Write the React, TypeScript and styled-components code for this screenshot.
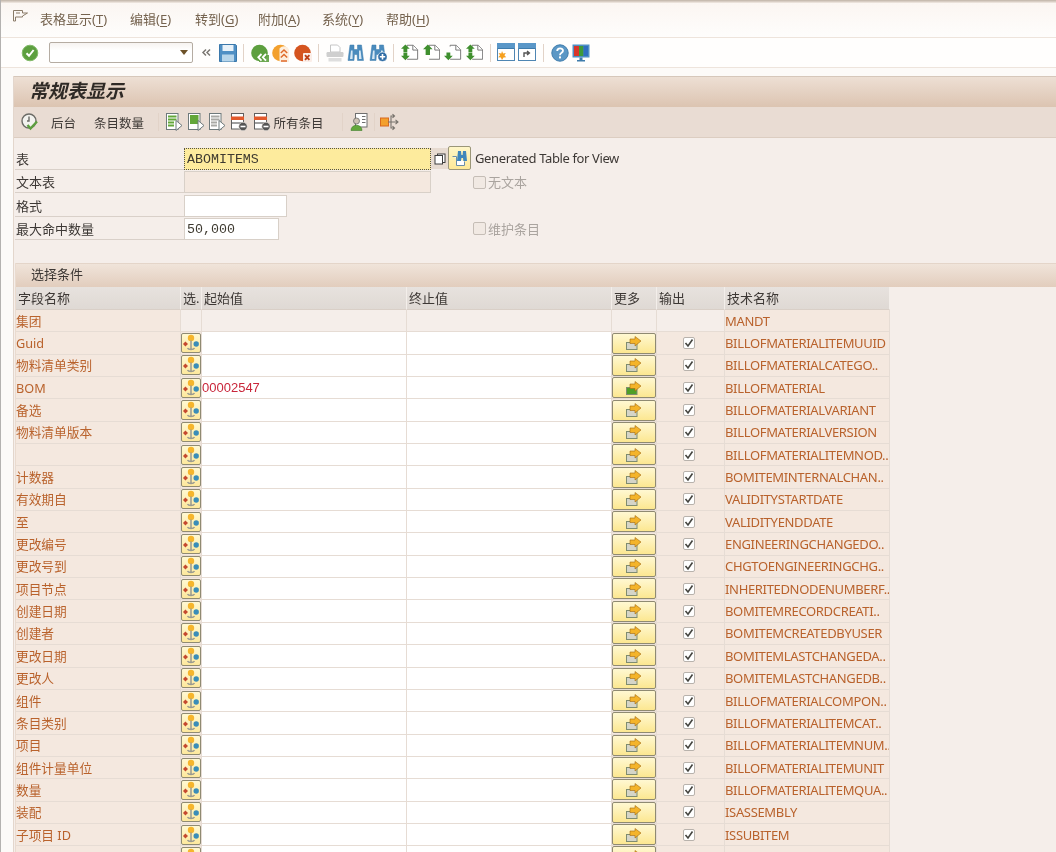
import React from "react";
import styled, { createGlobalStyle } from "styled-components";

const Global = createGlobalStyle`
  html, body { margin: 0; padding: 0; background: #fbf8f6; }
  body { font-family: "Noto Sans", "Noto Sans CJK SC", sans-serif; font-size: 13px; }
`;

const CJK = `"Noto Sans", "Noto Sans CJK SC", sans-serif`;

const Page = styled.div`
  width: 1056px;
  height: 852px;
  overflow: hidden;
  display: flex;
  flex-direction: column;
  background: #fcfaf8;
  border-left: 1px solid #b4b2b0;
  box-sizing: border-box;
  font-family: ${CJK};
  filter: blur(0.3px);
`;
const TopEdge = styled.div`
  height: 3px;
  flex: none;
  margin-left: -1px;
  background: linear-gradient(#bfb3a6, #ddd3ca 60%, #f3ece6);
`;
const MenuBar = styled.nav`
  height: 34px;
  flex: none;
  display: flex;
  align-items: center;
  padding-left: 11px;
  background: linear-gradient(#fbf6f2, #fefdfc);
  box-sizing: border-box;
  padding-bottom: 3px;
`;
const MenuGlyph = styled.svg`
  width: 17px;
  height: 14px;
  margin-right: 11px;
  margin-top: -6px;
`;
const MenuItem = styled.span<{ $w: number }>`
  width: ${(p) => p.$w}px;
  flex: none;
  color: #75634f;
  font-size: 13px;
  line-height: 18px;
  white-space: nowrap;
  u { text-underline-offset: 2px; }
`;
const ToolBar = styled.div`
  height: 31px;
  flex: none;
  display: flex;
  align-items: center;
  padding-left: 18px;
  box-sizing: border-box;
  background: #fffefd;
  border-top: 1px solid #eee4dc;
  border-bottom: 1px solid #eee4dc;
`;
const Command = styled.div`
  width: 144px;
  height: 21px;
  margin-left: 8px;
  margin-right: 3px;
  box-sizing: border-box;
  background: linear-gradient(#f6f3f0, #ffffff 40%);
  border: 1px solid #b5aca2;
  border-radius: 2px;
  display: flex;
  align-items: center;
  justify-content: flex-end;
  padding-right: 4px;
`;
const Caret = styled.span`
  width: 0;
  height: 0;
  border-left: 4px solid transparent;
  border-right: 4px solid transparent;
  border-top: 5px solid #6d5229;
`;
const Tool = styled.span<{ $w?: number }>`
  width: ${(p) => p.$w ?? 21.5}px;
  height: 22px;
  flex: none;
  display: flex;
  align-items: center;
  justify-content: center;
`;
const Sep = styled.span`
  width: 1px;
  height: 18px;
  flex: none;
  margin: 0 4.75px;
  background: #e2d3c8;
`;
const Main = styled.main`
  margin-top: 8px;
  margin-left: 12px;
  flex: 1;
  min-height: 0;
  background: #f5eeea;
  border-left: 1px solid #e3d6cc;
`;
const TitleBar = styled.header`
  height: 31px;
  display: flex;
  align-items: center;
  padding: 0 0 5px 15px;
  box-sizing: border-box;
  background: linear-gradient(#eddfd4, #dcc4b1);
  border-top: 1px solid #d6c7ba;
`;
const Title = styled.h1`
  margin: 0;
  font-size: 19px;
  font-style: italic;
  font-weight: 700;
  color: #2f2a26;
  font-family: "Noto Sans CJK SC", sans-serif;
`;
const AppBar = styled.div`
  height: 31px;
  display: flex;
  align-items: center;
  padding-left: 5px;
  box-sizing: border-box;
  background: #e9dcd3;
  border-bottom: 1px solid #dccdc1;
`;
const AppLabel = styled.span<{ $ml?: number; $w: number }>`
  margin-left: ${(p) => p.$ml ?? 0}px;
  width: ${(p) => p.$w}px;
  flex: none;
  font-size: 12.5px;
  color: #3d3835;
  white-space: nowrap;
`;
const Form = styled.section`
  height: 125px;
  padding: 10px 0 0 1px;
  box-sizing: border-box;
  display: flex;
  flex-direction: column;
  gap: 1.3px;
`;
const FormRow = styled.div`
  height: 22px;
  display: flex;
  align-items: stretch;
`;
const FormLabel = styled.label`
  width: 169px;
  flex: none;
  box-sizing: border-box;
  line-height: 23px;
  height: 22px;
  padding-left: 1px;
  font-size: 13px;
  color: #3d3835;
  border-bottom: 1px solid #d9d0c9;
`;
const Field = styled.div<{ $w: number; $kind?: "req" | "off" }>`
  width: ${(p) => p.$w}px;
  height: 22px;
  flex: none;
  box-sizing: border-box;
  font-family: "Liberation Mono", monospace;
  font-size: 13.3px;
  line-height: 22px;
  padding-left: 2px;
  color: #3e3a30;
  background: ${(p) => (p.$kind === "req" ? "#fdeb9d" : p.$kind === "off" ? "#f4e8df" : "#ffffff")};
  border: 1px ${(p) => (p.$kind === "req" ? "dotted #56534a" : "solid #d8d0c8")};
`;
const CopyBtn = styled.span`
  width: 17px;
  height: 21px;
  flex: none;
  background: #e7dbd1;
  display: flex;
  align-items: center;
  justify-content: center;
`;
const HelpBtn = styled.span`
  width: 23px;
  height: 24px;
  margin-top: -2px;
  flex: none;
  box-sizing: border-box;
  background: linear-gradient(#fff6c8, #fde997);
  border: 1px solid #9b9678;
  border-radius: 2px;
  display: flex;
  align-items: center;
  justify-content: center;
`;
const Description = styled.span`
  margin-left: 4px;
  line-height: 21px;
  font-size: 13px;
  letter-spacing: -0.38px;
  color: #3d3835;
  white-space: nowrap;
`;
const OffCheck = styled.span<{ $ml: number }>`
  margin-left: ${(p) => p.$ml}px;
  display: flex;
  align-items: center;
  gap: 2px;
  color: #aaa49f;
  font-size: 13px;
  line-height: 22px;
  &::before {
    content: "";
    width: 11px;
    height: 11px;
    border: 1px solid #c5bdb6;
    border-radius: 2px;
    background: #f1e9e3;
  }
`;
const Section = styled.section`
  margin-left: 1px;
  border-left: 1px solid #eadbcf;
`;
const SectionHead = styled.div`
  height: 24px;
  line-height: 21px;
  padding-left: 15px;
  box-sizing: border-box;
  font-size: 13px;
  color: #3d3835;
  background: linear-gradient(#f0e4da, #e2cdbd);
  border-top: 1px solid #e4d5c9;
`;
const Columns = "165px 21px 205px 205px 45px 68px 165px";
const HeadRow = styled.div`
  display: grid;
  grid-template-columns: ${Columns};
  width: 874px;
  height: 23px;
`;
const HeadCell = styled.div`
  background: linear-gradient(#e7e2de, #dfd9d4);
  border-right: 1px solid #f3eeea;
  border-bottom: 1px solid #d9cfc7;
  box-sizing: border-box;
  padding-left: 2px;
  line-height: 22px;
  font-size: 13px;
  color: #3d3835;
  overflow: hidden;
  white-space: nowrap;
`;
const Row = styled.div`
  display: grid;
  grid-template-columns: ${Columns};
  width: 874px;
  height: 22.35px;
`;
const Cell = styled.div<{ $tone: "label" | "blank" | "white" }>`
  box-sizing: border-box;
  border-right: 1px solid #e6dcd4;
  border-bottom: 1px solid #e6dcd4;
  background: ${(p) => (p.$tone === "label" ? "#f4e8df" : p.$tone === "white" ? "#ffffff" : "#f5eeea")};
  display: flex;
  align-items: center;
  overflow: hidden;
  min-width: 0;
`;
const RowText = styled.span`
  color: #b9622c;
  font-size: 12.7px;
  line-height: 20px;
  white-space: nowrap;
`;
const TechText = styled(RowText)`
  font-size: 13px;
  letter-spacing: -0.33px;
`;
const ValueText = styled.span`
  color: #c9263a;
  font-size: 13px;
  font-family: "Liberation Sans", sans-serif;
`;
const SelectBtn = styled.span`
  width: 20px;
  height: 20px;
  flex: none;
  box-sizing: border-box;
  background: linear-gradient(#fff8d2, #fde89c);
  border: 1px solid #8f8a72;
  border-radius: 2px;
  display: flex;
  align-items: center;
  justify-content: center;
`;
const MoreBtn = styled.span`
  width: 44px;
  height: 21px;
  flex: none;
  box-sizing: border-box;
  background: linear-gradient(#fff8d2, #fce791);
  border: 1px solid #8f8a72;
  border-radius: 2px;
  display: flex;
  align-items: center;
  justify-content: center;
`;
const CheckBox = styled.span`
  width: 12px;
  height: 12px;
  margin-left: 26px;
  box-sizing: border-box;
  background: #fff;
  border: 1px solid #b8b2ac;
  border-radius: 2px;
  display: flex;
  align-items: center;
  justify-content: center;
`;

/* ---------- icons ---------- */
type S = { children: React.ReactNode; w?: number; h?: number; dw?: number; dh?: number };
const Ic = ({ children, w = 18, h = 18, dw, dh }: S) => (
  <svg width={dw ?? w} height={dh ?? h} viewBox={`0 0 ${w} ${h}`} fill="none">{children}</svg>
);

const StatusIcon = () => (
  <Ic>
    <circle cx="9" cy="9" r="7.8" fill="#5d9f3f" stroke="#82ba69" />
    <path d="M5.5 9.2 8 11.8 12.6 6" stroke="#fff" strokeWidth="2" />
  </Ic>
);
const BackArrows = () => (
  <Ic w={14} h={14}>
    <path d="M7 3.5 4 6.5l3 3M11 3.5 8 6.5l3 3" stroke="#7b7772" strokeWidth="1.5" />
  </Ic>
);
const SaveIcon = () => (
  <Ic>
    <path d="M0.5 0.5h16l1 1v16h-17z" fill="#4f8fc4" stroke="#3b78ab" />
    <rect x="3.5" y="1" width="11" height="6" fill="#e9f2f9" />
    <rect x="3" y="10.5" width="12" height="7" fill="#b7d5ea" />
  </Ic>
);
const RoundIcon = ({ fill, mark }: { fill: string; mark: "back" | "up" | "x" }) => (
  <Ic>
    <circle cx="8.5" cy="9" r="8.3" fill={fill} />
    {mark === "back" && (
      <>
        <path d="M8 11h10v7H8z" fill={fill} opacity="0.9" />
        <path d="M10.5 10l-3.2 3.3 3.2 3.3M15 10l-3.2 3.3 3.2 3.3" stroke="#fff" strokeWidth="1.8" />
      </>
    )}
    {mark === "up" && (
      <>
        <path d="M7.5 4.5c3-3 7-3 9.5 1v12.5h-9.5z" fill="#fdeedd" />
        <path d="M8.8 9l3.2-3 3.2 3M8.8 13.5l3.2-3 3.2 3M9 17h6" stroke="#df6a2a" strokeWidth="1.5" />
      </>
    )}
    {mark === "x" && (
      <>
        <rect x="9" y="9" width="9" height="9" rx="1" fill="#fbeee8" />
        <path d="M11 11.2l4.4 4.6M15.4 11.2l-4.4 4.6" stroke="#bd3f17" strokeWidth="1.9" />
      </>
    )}
  </Ic>
);
const PrintIcon = () => (
  <Ic>
    <path d="M4.5 1h7l2.5 2.5V8H4.5z" fill="#fff" stroke="#c6c6c6" />
    <rect x="0.5" y="8" width="17" height="5" rx="1.2" fill="#cfcfcf" />
    <rect x="2.5" y="14" width="13" height="3.5" fill="#dedede" />
  </Ic>
);
const BinoIcon = ({ plus }: { plus?: boolean }) => (
  <Ic>
    <path d="M3 1h4v4.5h3.5V1h4l2 15.5h-6l-.4-6H7.4l-.4 6H1z" fill="#4a8bbd" stroke="#3f7cac" strokeWidth=".5" />
    <path d="M4 6.5h1.6v8.5H3zM12 6.5h1.6l1 8.5H12z" fill="#d6e7f3" />
    {plus && (
      <>
        <circle cx="13.5" cy="12.8" r="4.7" fill="#2f6ca5" stroke="#fff" strokeWidth=".6" />
        <path d="M10.8 12.8h5.4M13.5 10.1v5.4" stroke="#fff" strokeWidth="1.6" />
      </>
    )}
  </Ic>
);
const PageArrows = ({ up, down, shift }: { up?: boolean; down?: boolean; shift?: boolean }) => (
  <Ic w={20} h={18} dw={17.5} dh={16.5}>
    <path d="M7 2.5V1h7l5 5v11H7" fill="#fff" stroke="#6a6a6a" />
    <path d="M13.5 1v5.5H19" fill="#fff" stroke="#6a6a6a" />
    {up && (
      <path d={shift ? "M5.5 0 0 5.5h3V12h5V5.5h3z" : "M5 0 0 5h2.8v3.8h4.4V5H10z"} fill="#3f8f2e" />
    )}
    {down && <path d="M5 18l5-5H7.2V9.2H2.8V13H0z" fill="#3f8f2e" />}
  </Ic>
);
const WindowIcon = ({ star }: { star?: boolean }) => (
  <Ic w={19} h={19}>
    <rect x="0.5" y="0.5" width="17" height="17" fill="#fff" stroke="#4f86b3" />
    <rect x="0" y="0" width="18" height="5" fill="#5a97c8" />
    <path d="M1 5.5h16" stroke="#3f7cac" />
    {star ? (
      <path d="M5 8l1.1 2.6 2.7-.7-1.4 2.4 1.8 2-2.7.1L5 17l-1.1-2.6-2.7-.1 1.8-2-1.4-2.4 2.7.7z" fill="#f6a01f" />
    ) : (
      <path d="M6 14v-4h5M9 8l2.4 2L9 12" stroke="#555" strokeWidth="1.4" fill="none" />
    )}
  </Ic>
);
const HelpIcon = () => (
  <Ic>
    <circle cx="9" cy="9" r="8.2" fill="#5b97c5" stroke="#3f7cac" />
    <path d="M6.2 7c0-3.4 5.8-3.4 5.8-.2 0 2.1-3 2-3 4.4" stroke="#fff" strokeWidth="1.8" />
    <rect x="8" y="12.4" width="2" height="2" fill="#fff" />
  </Ic>
);
const MonitorIcon = () => (
  <Ic>
    <rect x="0.5" y="0.5" width="17" height="13" fill="#4f8fc4" />
    <rect x="2" y="2" width="5" height="10" fill="#d8352a" />
    <rect x="7" y="2" width="4.5" height="10" fill="#3e9a3a" />
    <rect x="11.5" y="2" width="4.5" height="10" fill="#2f6fc0" />
    <path d="M7.5 13.5h3v2.5h-3zM5 16h8v1.5H5z" fill="#3f7cac" />
  </Ic>
);
const ClockIcon = () => (
  <Ic>
    <circle cx="8" cy="8" r="7" fill="#f2f2ee" stroke="#6b6b66" strokeWidth="1.4" />
    <path d="M8 3.5V8h-2" stroke="#6b6b66" strokeWidth="1.4" />
    <path d="M6.5 12l3 3.5L16 8.5" stroke="#5d9f3f" strokeWidth="2.4" />
  </Ic>
);
const DocBars = ({ tone }: { tone: "green" | "solid" | "gray" }) => {
  const c = tone === "gray" ? "#a9a9a5" : "#63a73a";
  return (
    <Ic>
      <rect x="1.5" y="0.5" width="11.5" height="16" fill="#fff" stroke="#6f7a7c" />
      {tone === "solid" ? (
        <rect x="3" y="2" width="8.5" height="9" fill={c} />
      ) : (
        <path d="M3 3.5h8.5M3 6.5h8.5M3 9.5h6M3 12.5h6" stroke={c} strokeWidth="2" />
      )}
      <path d="M11 7.5l6 5-6 5z" fill="#fff" stroke="#6f7a7c" />
    </Ic>
  );
};
const DocMinus = () => (
  <Ic>
    <rect x="1.5" y="0.5" width="12" height="15.5" fill="#fff" stroke="#5f5f5f" />
    <rect x="1" y="3.5" width="13" height="3.5" fill="#e2592c" />
    <path d="M2 10h11" stroke="#5f5f5f" strokeWidth="1.2" />
    <circle cx="13" cy="13.5" r="4.2" fill="#555" stroke="#f4eee9" strokeWidth=".6" />
    <path d="M10.5 13.5h5" stroke="#fff" strokeWidth="1.6" />
  </Ic>
);
const PersonCard = () => (
  <Ic>
    <rect x="5.5" y="0.5" width="11.5" height="13.5" fill="#fff" stroke="#6f6f6f" />
    <path d="M12 3.5h3.5M12 6.5h3.5M12 9.5h3.5" stroke="#6f6f6f" />
    <circle cx="6.5" cy="8" r="3" fill="#cfc3b3" stroke="#5f5f5f" strokeWidth=".7" />
    <path d="M1 17.5c0-7 11-7 11 0z" fill="#63a73a" stroke="#3f7f2e" strokeWidth=".6" />
  </Ic>
);
const FlowIcon = () => (
  <Ic w={20} h={18}>
    <rect x="0.5" y="5" width="8" height="8" fill="#f3a02d" stroke="#d9691f" />
    <path d="M8 9h10M15.5 6.8 18 9l-2.5 2.2M11 9V3h3M12.5 1.2 14.5 3l-2 1.8M11 9v6h3M12.5 13.2l2 1.8-2 1.8" stroke="#77726c" strokeWidth="1.1" />
  </Ic>
);
const CopyIcon = () => (
  <Ic w={12} h={12}>
    <rect x="3.5" y="1" width="7.5" height="8.5" fill="#fff" stroke="#3e3e3e" />
    <rect x="1" y="2.5" width="7.5" height="8.5" fill="#fff" stroke="#3e3e3e" />
  </Ic>
);
const SearchHelpIcon = () => (
  <Ic>
    <path d="M1.5 7.5h4v9h8v-4" stroke="#6a8ea8" fill="#fff" />
    <path d="M7 2h3l.4 4h1.2l.4-4h3l1 10h-3.6l-.4-3h-1.6l-.4 3H6z" fill="#3f86bb" />
  </Ic>
);
const SelectIcon = () => (
  <Ic>
    <circle cx="9" cy="4" r="3.2" fill="#f6b52c" />
    <path d="M9 6.5V15M5.5 14c1 2 6 2 7 0" stroke="#9a9a90" strokeWidth="1.5" />
    <path d="M3.4 7.5 6 10l-2.6 2.5L1 10z" fill="#c5492e" />
    <circle cx="14.2" cy="10" r="2.7" fill="#3a8db8" />
  </Ic>
);
const MoreIcon = ({ filled }: { filled?: boolean }) => (
  <Ic w={16} h={14}>
    <rect x="0.5" y="6.5" width="10.5" height="7" fill={filled ? "#4f9f27" : "#d5d5c8"} stroke="#7f8c70" />
    <path d="M4 3h5V0.5L15 5 9 10V7.5H4z" fill="#f4b42a" stroke="#a36a12" strokeWidth=".6" />
  </Ic>
);
const TickIcon = () => (
  <Ic w={10} h={10}>
    <path d="M1.5 5 4 8l4.5-6.5" stroke="#454540" strokeWidth="1.6" />
  </Ic>
);

/* ---------- data ---------- */
const menus: [string, string, number][] = [
  ["表格显示", "T", 90], ["编辑", "E", 65], ["转到", "G", 63], ["附加", "A", 64], ["系统", "Y", 64], ["帮助", "H", 64],
];
const rows: [string, string, string?][] = [
  ["Guid", "BILLOFMATERIALITEMUUID"],
  ["物料清单类别", "BILLOFMATERIALCATEGO.."],
  ["BOM", "BILLOFMATERIAL", "00002547"],
  ["备选", "BILLOFMATERIALVARIANT"],
  ["物料清单版本", "BILLOFMATERIALVERSION"],
  ["", "BILLOFMATERIALITEMNOD.."],
  ["计数器", "BOMITEMINTERNALCHAN.."],
  ["有效期自", "VALIDITYSTARTDATE"],
  ["至", "VALIDITYENDDATE"],
  ["更改编号", "ENGINEERINGCHANGEDO.."],
  ["更改号到", "CHGTOENGINEERINGCHG.."],
  ["项目节点", "INHERITEDNODENUMBERF.."],
  ["创建日期", "BOMITEMRECORDCREATI.."],
  ["创建者", "BOMITEMCREATEDBYUSER"],
  ["更改日期", "BOMITEMLASTCHANGEDA.."],
  ["更改人", "BOMITEMLASTCHANGEDB.."],
  ["组件", "BILLOFMATERIALCOMPON.."],
  ["条目类别", "BILLOFMATERIALITEMCAT.."],
  ["项目", "BILLOFMATERIALITEMNUM.."],
  ["组件计量单位", "BILLOFMATERIALITEMUNIT"],
  ["数量", "BILLOFMATERIALITEMQUA.."],
  ["装配", "ISASSEMBLY"],
  ["子项目 ID", "ISSUBITEM"],
];
const heads = ["字段名称", "选.", "起始值", "终止值", "更多", "输出", "技术名称"];

export default function App() {
  return (
    <Page>
      <Global />
      <TopEdge />
      <MenuBar>
        <MenuGlyph viewBox="0 0 17 14" fill="none">
          <path d="M1.5 1.5h9v2.5h5l-5 3v1h-7v4h-2z" stroke="#8a7b68" />
          <path d="M4 4h4" stroke="#8a7b68" />
        </MenuGlyph>
        {menus.map(([t, k, w]) => (
          <MenuItem key={k} $w={w}>{t}(<u>{k}</u>)</MenuItem>
        ))}
      </MenuBar>
      <ToolBar>
        <Tool><StatusIcon /></Tool>
        <Command><Caret /></Command>
        <Tool><BackArrows /></Tool>
        <Tool><SaveIcon /></Tool>
        <Sep />
        <Tool><RoundIcon fill="#5d9f3f" mark="back" /></Tool>
        <Tool><RoundIcon fill="#f3a02d" mark="up" /></Tool>
        <Tool><RoundIcon fill="#d5541f" mark="x" /></Tool>
        <Sep />
        <Tool><PrintIcon /></Tool>
        <Tool><BinoIcon /></Tool>
        <Tool><BinoIcon plus /></Tool>
        <Sep />
        <Tool><PageArrows up down /></Tool>
        <Tool><PageArrows up shift /></Tool>
        <Tool><PageArrows down /></Tool>
        <Tool><PageArrows up down /></Tool>
        <Sep />
        <Tool><WindowIcon star /></Tool>
        <Tool><WindowIcon /></Tool>
        <Sep />
        <Tool><HelpIcon /></Tool>
        <Tool><MonitorIcon /></Tool>
      </ToolBar>
      <Main>
        <TitleBar><Title>常规表显示</Title></TitleBar>
        <AppBar>
          <Tool $w={22}><ClockIcon /></Tool>
          <AppLabel $ml={10} $w={43}>后台</AppLabel>
          <AppLabel $w={59}>条目数量</AppLabel>
          <Sep />
          <Tool><DocBars tone="green" /></Tool>
          <Tool><DocBars tone="solid" /></Tool>
          <Tool><DocBars tone="gray" /></Tool>
          <Tool><DocMinus /></Tool>
          <Tool $w={24}><DocMinus /></Tool>
          <AppLabel $w={64}>所有条目</AppLabel>
          <Sep />
          <Tool $w={21}><PersonCard /></Tool>
          <Sep />
          <Tool><FlowIcon /></Tool>
        </AppBar>
        <Form>
          <FormRow>
            <FormLabel>表</FormLabel>
            <Field $w={247} $kind="req">ABOMITEMS</Field>
            <CopyBtn><CopyIcon /></CopyBtn>
            <HelpBtn><SearchHelpIcon /></HelpBtn>
            <Description>Generated Table for View</Description>
          </FormRow>
          <FormRow>
            <FormLabel>文本表</FormLabel>
            <Field $w={247} $kind="off" />
            <OffCheck $ml={42}>无文本</OffCheck>
          </FormRow>
          <FormRow>
            <FormLabel>格式</FormLabel>
            <Field $w={103} />
          </FormRow>
          <FormRow>
            <FormLabel>最大命中数量</FormLabel>
            <Field $w={95}>50,000</Field>
            <OffCheck $ml={194}>维护条目</OffCheck>
          </FormRow>
        </Form>
        <Section>
          <SectionHead>选择条件</SectionHead>
          <HeadRow>
            {heads.map((h) => <HeadCell key={h}>{h}</HeadCell>)}
          </HeadRow>
          <Row>
            <Cell $tone="label"><RowText>集团</RowText></Cell>
            <Cell $tone="blank" />
            <Cell $tone="blank" />
            <Cell $tone="blank" />
            <Cell $tone="blank" />
            <Cell $tone="blank" />
            <Cell $tone="label"><TechText>MANDT</TechText></Cell>
          </Row>
          {rows.map(([label, tech, value]) => (
            <Row key={tech}>
              <Cell $tone="label"><RowText>{label}</RowText></Cell>
              <Cell $tone="label"><SelectBtn><SelectIcon /></SelectBtn></Cell>
              <Cell $tone="white">{value && <ValueText>{value}</ValueText>}</Cell>
              <Cell $tone="white" />
              <Cell $tone="label"><MoreBtn><MoreIcon filled={!!value} /></MoreBtn></Cell>
              <Cell $tone="label"><CheckBox><TickIcon /></CheckBox></Cell>
              <Cell $tone="label"><TechText>{tech}</TechText></Cell>
            </Row>
          ))}
          <Row>
            <Cell $tone="label" />
            <Cell $tone="label"><SelectBtn><SelectIcon /></SelectBtn></Cell>
            <Cell $tone="white" />
            <Cell $tone="white" />
            <Cell $tone="label"><MoreBtn><MoreIcon /></MoreBtn></Cell>
            <Cell $tone="label" />
            <Cell $tone="label" />
          </Row>
        </Section>
      </Main>
    </Page>
  );
}
